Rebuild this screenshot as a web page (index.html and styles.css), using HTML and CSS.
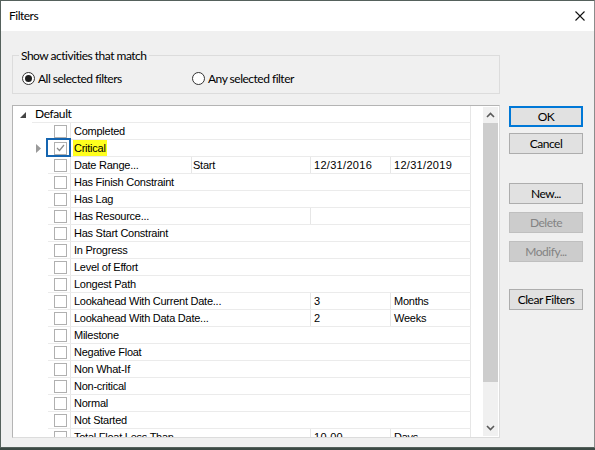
FILE: index.html
```html
<!DOCTYPE html>
<html lang="en">
<head>
    <meta charset="UTF-8">
    <title>Filters</title>
    <link rel="stylesheet" href="styles.css">
</head>
<body>
    <div class="dialog">
        <div class="titlebar">
            <span class="title">Filters</span>
            <svg class="close" width="10" height="10" viewBox="0 0 10 10">
                <path d="M0.5 0.5 L9.5 9.5 M9.5 0.5 L0.5 9.5" stroke="#111" stroke-width="1.1" fill="none"/>
            </svg>
        </div>

        <div class="body">
            <!-- match mode -->
            <fieldset class="group">
                <legend>Show activities that match</legend>
                <div class="options">
                    <label class="opt first"><span class="radio on"></span>All selected filters</label>
                    <label class="opt"><span class="radio"></span>Any selected filter</label>
                </div>
            </fieldset>

            <div class="main">
                <!-- filter tree -->
                <div class="list">
                    <div class="rows">
                        <div class="row head">
                            <span class="twisty"><svg width="6" height="6" viewBox="0 0 6 6"><polygon points="6,0 6,6 0,6" fill="#444"/></svg></span>
                            <div class="line"><span class="cell name">Default</span></div>
                        </div>

                        <div class="row"><span class="gut"></span><div class="line"><span class="chk"><i class="box"></i></span><span class="cell name">Completed</span></div></div>
                        <div class="row"><span class="gut"><svg class="arrow" width="5" height="9" viewBox="0 0 5 9"><polygon points="0,0 5,4.5 0,9" fill="#9a9a9a"/></svg></span><div class="line"><span class="chk focus"><i class="box checked"><svg width="9" height="8" viewBox="0 0 9 8"><polyline points="1,4 3.5,6.5 8,1" stroke="#8a8a8a" stroke-width="1.2" fill="none"/></svg></i></span><span class="cell name"><mark>Critical</mark></span></div></div>
                        <div class="row"><span class="gut"></span><div class="line"><span class="chk"><i class="box"></i></span><span class="cell name split">Date Range...</span><span class="cell c2">Start</span><span class="cell c3 num">12/31/2016</span><span class="cell c4 num">12/31/2019</span></div></div>
                        <div class="row"><span class="gut"></span><div class="line"><span class="chk"><i class="box"></i></span><span class="cell name">Has Finish Constraint</span></div></div>
                        <div class="row"><span class="gut"></span><div class="line"><span class="chk"><i class="box"></i></span><span class="cell name">Has Lag</span></div></div>
                        <div class="row"><span class="gut"></span><div class="line"><span class="chk"><i class="box"></i></span><span class="cell name wide">Has Resource...</span><span class="cell c4"></span></div></div>
                        <div class="row"><span class="gut"></span><div class="line"><span class="chk"><i class="box"></i></span><span class="cell name">Has Start Constraint</span></div></div>
                        <div class="row"><span class="gut"></span><div class="line"><span class="chk"><i class="box"></i></span><span class="cell name">In Progress</span></div></div>
                        <div class="row"><span class="gut"></span><div class="line"><span class="chk"><i class="box"></i></span><span class="cell name">Level of Effort</span></div></div>
                        <div class="row"><span class="gut"></span><div class="line"><span class="chk"><i class="box"></i></span><span class="cell name">Longest Path</span></div></div>
                        <div class="row"><span class="gut"></span><div class="line"><span class="chk"><i class="box"></i></span><span class="cell name wide">Lookahead With Current Date...</span><span class="cell c3 num">3</span><span class="cell c4">Months</span></div></div>
                        <div class="row"><span class="gut"></span><div class="line"><span class="chk"><i class="box"></i></span><span class="cell name wide">Lookahead With Data Date...</span><span class="cell c3 num">2</span><span class="cell c4">Weeks</span></div></div>
                        <div class="row"><span class="gut"></span><div class="line"><span class="chk"><i class="box"></i></span><span class="cell name">Milestone</span></div></div>
                        <div class="row"><span class="gut"></span><div class="line"><span class="chk"><i class="box"></i></span><span class="cell name">Negative Float</span></div></div>
                        <div class="row"><span class="gut"></span><div class="line"><span class="chk"><i class="box"></i></span><span class="cell name">Non What-If</span></div></div>
                        <div class="row"><span class="gut"></span><div class="line"><span class="chk"><i class="box"></i></span><span class="cell name">Non-critical</span></div></div>
                        <div class="row"><span class="gut"></span><div class="line"><span class="chk"><i class="box"></i></span><span class="cell name">Normal</span></div></div>
                        <div class="row"><span class="gut"></span><div class="line"><span class="chk"><i class="box"></i></span><span class="cell name">Not Started</span></div></div>
                        <div class="row"><span class="gut"></span><div class="line"><span class="chk"><i class="box"></i></span><span class="cell name wide">Total Float Less Than...</span><span class="cell c3 num">10.00</span><span class="cell c4">Days</span></div></div>
                    </div>

                    <div class="vscroll">
                        <span class="sbtn"><svg width="9" height="6" viewBox="0 0 9 6"><polyline points="1,5 4.5,1.5 8,5" stroke="#5a5a5a" stroke-width="1.6" fill="none"/></svg></span>
                        <span class="thumb"></span>
                        <span class="sbtn down"><svg width="9" height="6" viewBox="0 0 9 6"><polyline points="1,1 4.5,4.5 8,1" stroke="#5a5a5a" stroke-width="1.6" fill="none"/></svg></span>
                    </div>
                </div>

                <!-- dialog buttons -->
                <div class="buttons">
                    <div class="btn-group">
                        <button class="default">OK</button>
                        <button>Cancel</button>
                    </div>
                    <div class="btn-group edit">
                        <button>New...</button>
                        <button disabled>Delete</button>
                        <button disabled>Modify...</button>
                    </div>
                    <div class="btn-group clear">
                        <button>Clear Filters</button>
                    </div>
                </div>
            </div>
        </div>
    </div>
</body>
</html>
```

FILE: styles.css
```css
html, body {
    margin: 0;
    padding: 0;
    background: #3c4a45;
}

.dialog {
    width: 595px;
    height: 448px;
    box-sizing: border-box;
    border: 1px solid #55615c;
    border-right-color: #8c8c8c;
    background: #f0f0f0;
    font-family: "Lato", "Liberation Sans", sans-serif;
    font-size: 12px;
    letter-spacing: -0.5px;
    color: #000;
    overflow: hidden;
}

/* title bar */
.titlebar {
    height: 30px;
    background: #fff;
    display: flex;
    align-items: center;
    padding: 0 9px 0 8px;
}

.title {
    flex: 1;
    line-height: 30px;
}

.body {
    padding: 17px 0 0 11px;
}

/* group box */
.group {
    width: 488px;
    box-sizing: border-box;
    margin: 0;
    padding: 8px 9px 7px;
    border: 1px solid #dcdcdc;
}

.group legend {
    margin-left: -3px;
    padding: 0 2px;
    line-height: 15px;
}

.options {
    display: flex;
    line-height: 15px;
}

.opt {
    display: flex;
    align-items: center;
    gap: 3px;
}

.opt.first {
    width: 170px;
}

.radio {
    width: 13px;
    height: 13px;
    box-sizing: border-box;
    border: 1px solid #333;
    border-radius: 50%;
    background: #fff;
    display: flex;
    align-items: center;
    justify-content: center;
}

.radio.on::after {
    content: "";
    width: 7px;
    height: 7px;
    border-radius: 50%;
    background: #1e1e1e;
}

.main {
    display: flex;
    margin-top: 11px;
}

/* tree list */
.list {
    width: 488px;
    height: 333px;
    box-sizing: border-box;
    border: 1px solid #b4b4b4;
    border-right-color: #dcdcdc;
    border-bottom-color: #dcdcdc;
    background: #fff;
    display: flex;
    overflow: hidden;
    font-family: "Liberation Sans", Arial, sans-serif;
    font-size: 11px;
    letter-spacing: -0.25px;
}

.rows {
    width: 458px;
    flex: none;
}

.row {
    display: flex;
    height: 17px;
}

.row.head .cell {
    font-family: "Lato", "Liberation Sans", sans-serif;
    font-size: 12px;
    letter-spacing: -0.4px;
}

.gut {
    width: 35px;
    flex: none;
    display: flex;
    align-items: center;
    justify-content: flex-end;
}

.gut .arrow {
    margin-right: 7px;
}

.twisty {
    width: 19px;
    flex: none;
    display: flex;
    align-items: center;
    justify-content: flex-end;
    padding-right: 6px;
    box-sizing: border-box;
}

.line {
    flex: 1;
    display: flex;
    border-bottom: 1px solid #ebebeb;
    border-right: 1px solid #e6e6e6;
    line-height: 16px;
}

.chk {
    position: relative;
    width: 23px;
    flex: none;
    box-sizing: border-box;
    border-right: 1px solid #e6e6e6;
    display: flex;
    align-items: center;
    padding-left: 6px;
}

.box {
    width: 13px;
    height: 13px;
    box-sizing: border-box;
    border: 1px solid #b0b0b0;
    background: #fff;
    display: flex;
    align-items: center;
    justify-content: center;
}

/* keyboard focus on the checked filter */
.chk.focus::after {
    content: "";
    position: absolute;
    left: -2px;
    top: -2px;
    width: 25px;
    height: 19px;
    box-sizing: border-box;
    border: 2px solid #1565b0;
}

.cell {
    box-sizing: border-box;
    padding-left: 3px;
    white-space: nowrap;
    overflow: hidden;
}

.cell.name {
    flex: 1;
}

.cell.name.split {
    flex: none;
    width: 121px;
    border-right: 1px solid #e6e6e6;
}

.cell.name.wide {
    flex: none;
    width: 240px;
    border-right: 1px solid #e6e6e6;
}

.cell.c2 {
    width: 119px;
    padding-left: 1px;
    border-right: 1px solid #e6e6e6;
}

.cell.c3 {
    width: 80px;
    border-right: 1px solid #e6e6e6;
}

.cell.c4 {
    flex: 1;
}

.num {
    letter-spacing: 0.3px;
}

mark {
    background: #ffff1e;
    color: #000;
    display: inline-block;
    height: 16px;
    margin-left: -1px;
    padding: 0 1px;
}

/* scrollbar */
.vscroll {
    width: 15px;
    margin: 1px 1px 0 auto;
    height: 329px;
    background: #f0f0f0;
    display: flex;
    flex-direction: column;
}

.sbtn {
    height: 16px;
    display: flex;
    align-items: center;
    justify-content: center;
}

.thumb {
    height: 259px;
    background: #cdcdcd;
}

.sbtn.down {
    margin-top: auto;
}

/* buttons */
.buttons {
    margin-left: 9px;
    margin-top: 1px;
    width: 74px;
}

.btn-group {
    display: flex;
    flex-direction: column;
    gap: 6px;
}

.btn-group.edit {
    margin-top: 29px;
    gap: 8px;
}

.btn-group.clear {
    margin-top: 27px;
}

button {
    height: 21px;
    width: 74px;
    padding: 0;
    font-family: "Lato", "Liberation Sans", sans-serif;
    font-size: 12px;
    letter-spacing: -0.5px;
    color: #000;
    background: #e1e1e1;
    border: 1px solid #adadad;
}

button.default {
    border-color: #0078d7;
    box-shadow: inset 0 0 0 1px #0078d7;
}

button:disabled {
    background: #cccccc;
    border-color: #bfbfbf;
    color: #838383;
}
```
